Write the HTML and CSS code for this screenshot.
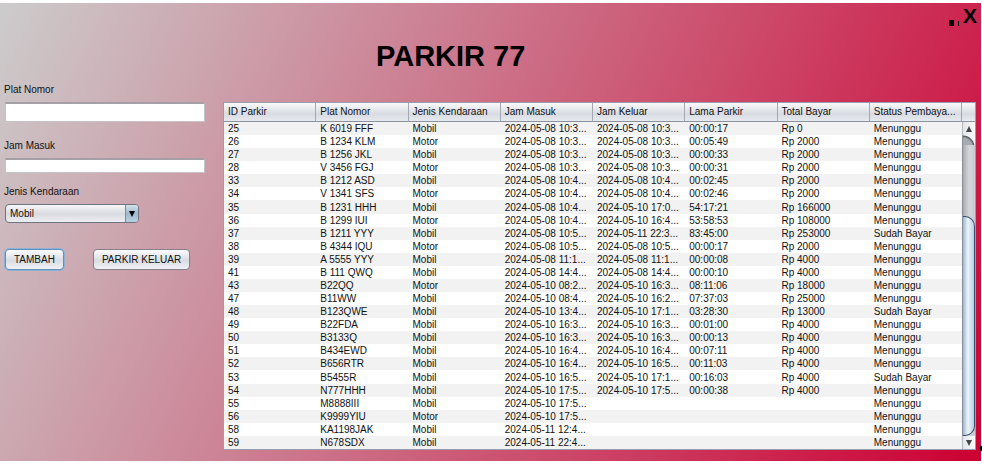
FILE: index.html
```html
<!DOCTYPE html>
<html lang="id">
<head>
<meta charset="utf-8">
<title>Parkir 77</title>
<link rel="stylesheet" href="styles.css">
</head>
<body>
<main class="app">
  <header class="top">
    <h1 class="title">PARKIR 77</h1>
    <div class="window-controls">
      <button class="min" type="button" aria-label="Minimize"><svg width="10" height="6" viewBox="0 0 10 6"><path d="M0 0h5v6H0zM9 1h1v5H9z"/></svg></button>
      <button class="close" type="button">X</button>
    </div>
  </header>
  <form class="form">
    <label class="label" for="plat">Plat Nomor</label>
    <input class="field tall" id="plat" type="text">
    <label class="label" for="jam">Jam Masuk</label>
    <input class="field" id="jam" type="text">
    <label class="label" for="jenis">Jenis Kendaraan</label>
    <div class="combo">
      <select class="select" id="jenis"><option>Mobil</option><option>Motor</option></select>
      <span class="arrow"><svg width="6" height="6" viewBox="0 0 6 6"><path d="M0 0h6L3 6z"/></svg></span>
    </div>
    <div class="actions">
      <button class="btn primary" type="button">TAMBAH</button>
      <button class="btn" type="button">PARKIR KELUAR</button>
    </div>
  </form>
  <section class="grid">
    <table class="table">
      <thead><tr><th>ID Parkir</th><th>Plat Nomor</th><th>Jenis Kendaraan</th><th>Jam Masuk</th><th>Jam Keluar</th><th>Lama Parkir</th><th>Total Bayar</th><th>Status Pembaya...</th></tr></thead>
      <tbody>
        <tr><td>25</td><td>K 6019 FFF</td><td>Mobil</td><td>2024-05-08 10:3...</td><td>2024-05-08 10:3...</td><td>00:00:17</td><td>Rp 0</td><td>Menunggu</td></tr>
        <tr><td>26</td><td>B 1234 KLM</td><td>Motor</td><td>2024-05-08 10:3...</td><td>2024-05-08 10:3...</td><td>00:05:49</td><td>Rp 2000</td><td>Menunggu</td></tr>
        <tr><td>27</td><td>B 1256 JKL</td><td>Mobil</td><td>2024-05-08 10:3...</td><td>2024-05-08 10:3...</td><td>00:00:33</td><td>Rp 2000</td><td>Menunggu</td></tr>
        <tr><td>28</td><td>V 3456 FGJ</td><td>Motor</td><td>2024-05-08 10:3...</td><td>2024-05-08 10:3...</td><td>00:00:31</td><td>Rp 2000</td><td>Menunggu</td></tr>
        <tr><td>33</td><td>B 1212 ASD</td><td>Mobil</td><td>2024-05-08 10:4...</td><td>2024-05-08 10:4...</td><td>00:02:45</td><td>Rp 2000</td><td>Menunggu</td></tr>
        <tr><td>34</td><td>V 1341 SFS</td><td>Motor</td><td>2024-05-08 10:4...</td><td>2024-05-08 10:4...</td><td>00:02:46</td><td>Rp 2000</td><td>Menunggu</td></tr>
        <tr><td>35</td><td>B 1231 HHH</td><td>Mobil</td><td>2024-05-08 10:4...</td><td>2024-05-10 17:0...</td><td>54:17:21</td><td>Rp 166000</td><td>Menunggu</td></tr>
        <tr><td>36</td><td>B 1299 IUI</td><td>Motor</td><td>2024-05-08 10:4...</td><td>2024-05-10 16:4...</td><td>53:58:53</td><td>Rp 108000</td><td>Menunggu</td></tr>
        <tr><td>37</td><td>B 1211 YYY</td><td>Mobil</td><td>2024-05-08 10:5...</td><td>2024-05-11 22:3...</td><td>83:45:00</td><td>Rp 253000</td><td>Sudah Bayar</td></tr>
        <tr><td>38</td><td>B 4344 IQU</td><td>Motor</td><td>2024-05-08 10:5...</td><td>2024-05-08 10:5...</td><td>00:00:17</td><td>Rp 2000</td><td>Menunggu</td></tr>
        <tr><td>39</td><td>A 5555 YYY</td><td>Mobil</td><td>2024-05-08 11:1...</td><td>2024-05-08 11:1...</td><td>00:00:08</td><td>Rp 4000</td><td>Menunggu</td></tr>
        <tr><td>41</td><td>B 111 QWQ</td><td>Mobil</td><td>2024-05-08 14:4...</td><td>2024-05-08 14:4...</td><td>00:00:10</td><td>Rp 4000</td><td>Menunggu</td></tr>
        <tr><td>43</td><td>B22QQ</td><td>Motor</td><td>2024-05-10 08:2...</td><td>2024-05-10 16:3...</td><td>08:11:06</td><td>Rp 18000</td><td>Menunggu</td></tr>
        <tr><td>47</td><td>B11WW</td><td>Mobil</td><td>2024-05-10 08:4...</td><td>2024-05-10 16:2...</td><td>07:37:03</td><td>Rp 25000</td><td>Menunggu</td></tr>
        <tr><td>48</td><td>B123QWE</td><td>Mobil</td><td>2024-05-10 13:4...</td><td>2024-05-10 17:1...</td><td>03:28:30</td><td>Rp 13000</td><td>Sudah Bayar</td></tr>
        <tr><td>49</td><td>B22FDA</td><td>Mobil</td><td>2024-05-10 16:3...</td><td>2024-05-10 16:3...</td><td>00:01:00</td><td>Rp 4000</td><td>Menunggu</td></tr>
        <tr><td>50</td><td>B3133Q</td><td>Mobil</td><td>2024-05-10 16:3...</td><td>2024-05-10 16:3...</td><td>00:00:13</td><td>Rp 4000</td><td>Menunggu</td></tr>
        <tr><td>51</td><td>B434EWD</td><td>Mobil</td><td>2024-05-10 16:4...</td><td>2024-05-10 16:4...</td><td>00:07:11</td><td>Rp 4000</td><td>Menunggu</td></tr>
        <tr><td>52</td><td>B656RTR</td><td>Mobil</td><td>2024-05-10 16:4...</td><td>2024-05-10 16:5...</td><td>00:11:03</td><td>Rp 4000</td><td>Menunggu</td></tr>
        <tr><td>53</td><td>B5455R</td><td>Mobil</td><td>2024-05-10 16:5...</td><td>2024-05-10 17:1...</td><td>00:16:03</td><td>Rp 4000</td><td>Sudah Bayar</td></tr>
        <tr><td>54</td><td>N777HHH</td><td>Mobil</td><td>2024-05-10 17:5...</td><td>2024-05-10 17:5...</td><td>00:00:38</td><td>Rp 4000</td><td>Menunggu</td></tr>
        <tr><td>55</td><td>M8888III</td><td>Mobil</td><td>2024-05-10 17:5...</td><td></td><td></td><td></td><td>Menunggu</td></tr>
        <tr><td>56</td><td>K9999YIU</td><td>Motor</td><td>2024-05-10 17:5...</td><td></td><td></td><td></td><td>Menunggu</td></tr>
        <tr><td>58</td><td>KA1198JAK</td><td>Mobil</td><td>2024-05-11 12:4...</td><td></td><td></td><td></td><td>Menunggu</td></tr>
        <tr><td>59</td><td>N678SDX</td><td>Mobil</td><td>2024-05-11 22:4...</td><td></td><td></td><td></td><td>Menunggu</td></tr>
      </tbody>
    </table>
    <div class="scroll">
      <div class="corner"></div>
      <div class="cap up"><svg width="6" height="6" viewBox="0 0 6 6"><path d="M3 0l3 6H0z"/></svg></div>
      <div class="track"><div class="thumb"></div></div>
      <div class="cap down"><svg width="6" height="6" viewBox="0 0 6 6"><path d="M0 0h6L3 6z"/></svg></div>
    </div>
  </section>
  <span class="edge-mark"></span>
</main>
</body>
</html>
```
FILE: styles.css
```css
* { box-sizing: border-box; }

body {
  margin: 0;
  background: #fff;
  color: #111;
  font-family: "Liberation Sans", Arial, sans-serif;
  font-size: 10px;
  line-height: 12px;
}

.app {
  position: relative;
  display: grid;
  grid-template-columns: 223px 1fr;
  grid-template-rows: 76px 1fr;
  min-height: calc(100vh - 7px);
  margin: 3px 1px 4px 0;
  background: linear-gradient(115deg, #ccc, #c03);
}

.top {
  grid-column: 1 / -1;
  display: flex;
  justify-content: space-between;
  padding-left: 376px;
}

.title {
  margin: 36px 0 0;
  color: #000;
  font-size: 29px;
  line-height: 34px;
}

.window-controls {
  display: flex;
  align-items: flex-start;
  gap: 4px;
  padding-right: 4px;
}

.window-controls button {
  padding: 0;
  border: 0;
  background: none;
  color: #000;
}

.window-controls .min { padding-top: 17px; line-height: 0; }
.min svg { display: block; }

.window-controls .close {
  font: bold 21px/26px "Liberation Sans", Arial, sans-serif;
}

.form {
  display: flex;
  flex-direction: column;
  align-items: flex-start;
  padding: 5px 18px 0 4px;
}

.label { margin-bottom: 6px; }

.field {
  align-self: stretch;
  height: 15px;
  margin: 0 0 13px 1px;
  padding: 0 4px;
  border: 1px solid #c4c4c8;
  border-top: 2px solid #a5a0a5;
  background: #fff;
  font: inherit;
}

.field.tall { height: 20px; margin-bottom: 18px; }

.combo {
  position: relative;
  width: 134px;
  margin-left: 1px;
}

.select {
  appearance: none;
  display: block;
  width: 100%;
  height: 19px;
  padding: 1px 20px 0 4px;
  border: 1px solid #6d7480;
  border-radius: 4px;
  background: linear-gradient(#f8f8fa, #d9dbe0 50%, #eceef2);
  color: #111;
  font: inherit;
}

.arrow {
  position: absolute;
  top: 1px;
  right: 1px;
  bottom: 1px;
  display: flex;
  align-items: center;
  justify-content: center;
  width: 13px;
  border-left: 1px solid #6f8ba8;
  border-radius: 0 3px 3px 0;
  background: linear-gradient(#d5e2ed, #9fb9cf 50%, #b9d0e2);
  pointer-events: none;
}

.actions {
  display: flex;
  gap: 29px;
  margin: 26px 0 0 1px;
}

.btn {
  height: 21px;
  padding: 1px 8px 0;
  border: 1px solid #84808a;
  border-radius: 4px;
  background: linear-gradient(#fcfcfd, #d9dce2 55%, #f0f2f6);
  color: #111;
  font: inherit;
  white-space: nowrap;
}

.btn.primary {
  border-color: #5f8fbd;
  box-shadow: 0 0 0 1px #8fb2d4;
}

.grid {
  display: flex;
  margin: 23px 5px 11px 0;
  border: 1px solid #9a9db0;
  background: #fff;
}

.table {
  flex: 1;
  width: 100%;
  table-layout: fixed;
  border-collapse: separate;
  border-spacing: 0;
  white-space: nowrap;
}

.table th,
.table td {
  padding: 1px 0 0 4px;
  overflow: hidden;
  text-align: left;
  font-weight: normal;
}

.table th,
.corner {
  height: 19px;
  border-bottom: 1px solid #8c93a0;
  background: linear-gradient(#fafafb, #d8dbe1 60%, #e6e9ee);
}

.table th { padding: 0 0 0 4px; border-right: 1px solid #a3a7b2; }
.table tbody tr:nth-child(odd) { background: #f2f2f2; }

.scroll {
  display: flex;
  flex-direction: column;
  flex: 0 0 13px;
}

.cap {
  display: flex;
  align-items: center;
  justify-content: center;
  height: 13px;
  border-left: 1px solid #b5b8c0;
  background: linear-gradient(90deg, #e4e5ea, #fafafa);
  fill: #444;
}

.track {
  display: flex;
  flex: 1;
  flex-direction: column;
  justify-content: flex-end;
  border-left: 1px solid #888c98;
  background:
    radial-gradient(circle at 0 12px, #a9abb2 9px, #55585f 11px, #f4f4f6 12px) 0 0 / 100% 10px no-repeat,
    linear-gradient(90deg, #a9abb2, #d4d6db 50%, #c9cbd2);
}

.thumb {
  height: 73%;
  border: 1px solid #35506e;
  border-left: 0;
  border-radius: 0 10px 10px 0;
  background: linear-gradient(90deg, #9cb8d0, #eef5fa 45%, #b5cee2);
}

.edge-mark {
  position: absolute;
  right: -1px;
  bottom: 10px;
  width: 2px;
  height: 5px;
  background: #000;
}
```
